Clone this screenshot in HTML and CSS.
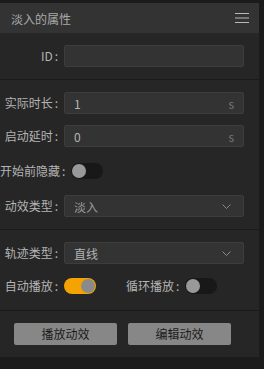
FILE: index.html
```html
<!DOCTYPE html>
<html lang="zh">
<head>
  <meta charset="UTF-8" />
  <title>淡入的属性</title>
  <link rel="stylesheet" href="styles.css">
</head>
<body>
  <div class="panel">
    <div class="panel-head">
      <span class="title">淡入的属性</span>
      <svg class="menu" width="14" height="10" viewBox="0 0 14 10">
        <line x1="0" y1="0.5" x2="14" y2="0.5" />
        <line x1="0" y1="5" x2="14" y2="5" />
        <line x1="0" y1="9.5" x2="14" y2="9.5" />
      </svg>
    </div>

    <div class="section">
      <div class="row">
        <span class="label">ID</span>
        <div class="field"></div>
      </div>
    </div>

    <div class="section">
      <div class="row">
        <span class="label">实际时长</span>
        <div class="field"><span class="value">1</span><span class="unit">s</span></div>
      </div>
      <div class="row">
        <span class="label">启动延时</span>
        <div class="field"><span class="value">0</span><span class="unit">s</span></div>
      </div>
      <div class="row tall">
        <span class="label">开始前隐藏</span>
        <div class="switch"><span class="knob"></span></div>
      </div>
      <div class="row">
        <span class="label">动效类型</span>
        <div class="field select dim">
          <span class="value">淡入</span>
          <svg class="chevron" width="9" height="5" viewBox="0 0 9 5"><polyline points="0.5,0.5 4.5,4.5 8.5,0.5" /></svg>
        </div>
      </div>
    </div>

    <div class="section sec-three">
      <div class="row">
        <span class="label">轨迹类型</span>
        <div class="field select">
          <span class="value">直线</span>
          <svg class="chevron" width="9" height="5" viewBox="0 0 9 5"><polyline points="0.5,0.5 4.5,4.5 8.5,0.5" /></svg>
        </div>
      </div>
      <div class="row">
        <span class="label">自动播放</span>
        <div class="switch on"><span class="knob"></span></div>
        <span class="label inline">循环播放</span>
        <div class="switch"><span class="knob"></span></div>
      </div>
    </div>

    <div class="actions">
      <div class="btn">播放动效</div>
      <div class="btn">编辑动效</div>
    </div>
  </div>
</body>
</html>
```

FILE: styles.css
```css
html, body { margin: 0; background: #1b1b1b; }
body { padding-top: 3px; font-family: "Noto Sans CJK SC", "Noto Sans", sans-serif; font-size: 12px; }

.panel { width: 259px; height: 354px; background: #262626; }
.panel-head { height: 30px; background: #333333; display: flex; align-items: center; justify-content: space-between; padding: 0 10px 0 11px; }
.title { color: #a9a9a9; font-size: 12px; }
.menu line { stroke: #b8b8b8; stroke-width: 1; }

.section { display: flex; flex-direction: column; gap: 11px; padding: 12px 15px 12px 0; border-bottom: 1px solid #1a1a1a; }
.section:first-of-type { padding-top: 13px; }
.sec-three { padding-bottom: 13px; }

.row { display: flex; align-items: center; gap: 6px; height: 22px; }
.row.tall { height: 26px; }
.label { flex: 0 0 58px; text-align: right; white-space: nowrap; color: #b4b4b4; line-height: 22px; }
.label::after { content: ":"; margin-left: 2px; }
.label.inline { flex: 0 0 auto; margin-left: 24px; }

.field { flex: 1; height: 20px; background: #333333; border: 1px solid #3d3d3d; border-radius: 2px; display: flex; align-items: center; justify-content: space-between; padding: 0 9px; }
.value { color: #b4b4b4; }
.unit { color: #777777; }
.select.dim .value { color: #9a9a9a; }
.chevron { margin-right: 3px; }
.chevron polyline { fill: none; stroke: #8a8a8a; stroke-width: 1; }

.switch { flex: 0 0 auto; width: 30px; height: 16px; padding: 0 1px; border-radius: 8px; background: #181818; display: flex; align-items: center; }
.switch.on { background: #f5a300; justify-content: flex-end; }
.knob { width: 14px; height: 14px; border-radius: 50%; background: #999999; }
.switch.on .knob { background: #8a8a8a; }

.actions { display: flex; gap: 11px; padding: 12px 14px; }
.btn { width: 103px; height: 22px; line-height: 22px; text-align: center; border-radius: 2px; background: #878787; color: #1a1a1a; }
```
